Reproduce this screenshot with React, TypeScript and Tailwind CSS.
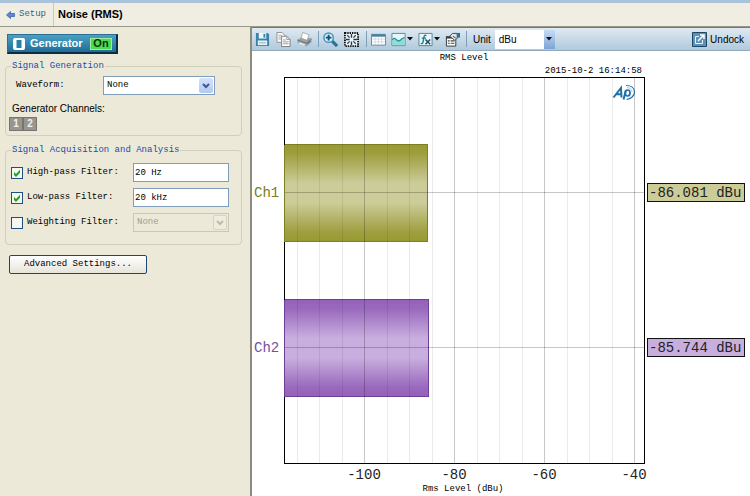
import { useState } from "react";
import type { ReactNode } from "react";

const MONO = "font-['Liberation_Mono',monospace]";

function Chevron({ className }: { className: string }) {
  return (
    <svg viewBox="0 0 8 6" className={className} fill="none" strokeWidth="2">
      <path d="M1 1l3 3 3-3" stroke="currentColor" />
    </svg>
  );
}

function Group({ title, children }: { title: string; children: ReactNode }) {
  return (
    <fieldset className="min-w-0 rounded border border-[#d0cfba] px-1">
      <legend className="ml-px px-px text-[9px] leading-3 text-[#1c4aa8]">
        {title}
      </legend>
      {children}
    </fieldset>
  );
}

type FilterRowProps = {
  id: string;
  label: string;
  checked?: boolean;
  children: ReactNode;
};

function FilterRow({ id, label, checked, children }: FilterRowProps) {
  return (
    <div className="flex items-center pr-2">
      <label htmlFor={id} className="flex w-[122px] shrink-0 items-center gap-1">
        <span className="relative size-3">
          <input
            id={id}
            type="checkbox"
            defaultChecked={checked}
            className="peer block size-3 appearance-none border border-[#1d5280] bg-[#f6f6f3]"
          />
          <svg
            viewBox="0 0 12 12"
            className="pointer-events-none absolute inset-0 hidden size-3 peer-checked:block"
          >
            <path d="M3 5v3l2 2 4-4.2v-3L5 7z" fill="#21a121" />
          </svg>
        </span>
        {label}
      </label>
      {children}
    </div>
  );
}

function Separator() {
  return <span className="h-4 w-px shrink-0 bg-[#7f9db5]" />;
}

function Tool({ label, children }: { label: string; children: ReactNode }) {
  return (
    <button type="button" aria-label={label} className="flex shrink-0 items-center">
      <svg viewBox="0 0 16 16" className="size-[15px]" fill="none">
        {children}
      </svg>
    </button>
  );
}

function MenuArrow() {
  return (
    <svg viewBox="0 0 6 4" className="h-1 w-1.5 shrink-0">
      <path d="M0 0h6L3 3.6z" fill="#111" />
    </svg>
  );
}

function Toolbar() {
  return (
    <div className="flex h-6 items-center border-y border-t-[#77776f] border-b-[#8fa9bd] bg-linear-to-b from-[#dfeaf2] to-[#b0c9dc] pr-1.5 pl-[3px] text-[10px] text-black">
      <div className="flex items-center gap-1.5">
        <Tool label="Save">
          <path d="M1 1h12.500l1.500 1.500V15H1z" fill="#3a83a8" />
          <path d="M4 1h8v6H4z" fill="#eef6fb" />
          <path d="M9 2h2v4H9z" fill="#3a83a8" />
          <path d="M3 9h10v5H3z" fill="#e2eff6" />
          <path d="M4.500 11.500h7" stroke="#8bb3ca" />
        </Tool>
        <Tool label="Copy">
          <path d="M1 .5h5.500l3 3V11H1z" fill="#fbfbfb" stroke="#8a8f93" />
          <path d="M2.500 3.500h4M2.500 5.500h3M2.500 7.500h3" stroke="#aaa" />
          <path d="M6 4.500h5.500l3.500 3.500v7.500H6z" fill="#fff" stroke="#777c80" />
          <path d="M11.500 4.500V8H15M7.500 8.500h3M7.500 10.500h6M7.500 12.500h6" stroke="#999" />
        </Tool>
        <Tool label="Print">
          <path d="M6 .5l7 2.500-2.500 6-6-2.500z" fill="#fff" stroke="#999" strokeWidth=".8" />
          <path d="M.5 8.500L4 6l6 2.500L13 6l2.500 1v4L10 15.500.5 11.500z" fill="#9da1a4" />
          <path d="M.5 8.500l9.500 3.500 5.500-4.500" stroke="#6b7074" />
          <path d="M2.500 11.500l6 2.500" stroke="#f4f4f4" strokeWidth="1.500" />
          <path d="M10.500 12.500l4-3" stroke="#3f86b8" strokeWidth="1.200" />
        </Tool>
      </div>
      <div className="ml-1.5 flex items-center gap-1">
        <Separator />
        <Tool label="Zoom in">
          <path d="M9.500 9.500l5.500 5.500" stroke="#2f7198" strokeWidth="3.400" />
          <circle cx="6" cy="6" r="5" fill="#d5eef8" stroke="#4397be" strokeWidth="1.600" />
          <path d="M6 3v6M3 6h6" stroke="#174c74" strokeWidth="2" />
        </Tool>
      </div>
      <div className="ml-1.5 flex items-center gap-[7px]">
        <Tool label="Fit to window">
          <path d="M1 1h14v14H1z" fill="#eef5f8" stroke="#111" strokeWidth="2" strokeDasharray="1.500 1" />
          <path d="M8 2v4M8 10v4M2 8h4M10 8h4" stroke="#1d3f50" strokeWidth="1.400" />
          <path d="M3.500 3.500l2.500 2.500M12.500 3.500L10 6M3.500 12.500L6 10M12.500 12.500L10 10" stroke="#1d3f50" strokeWidth="1.300" />
        </Tool>
        <Separator />
      </div>
      <div className="ml-1 flex items-center gap-[5px]">
        <Tool label="Show table">
          <path d="M.5 2.500h15v11.500H.5z" fill="#fff" stroke="#6c8294" />
          <path d="M1 2.500h14v2.500H1z" fill="#3f7fa8" />
          <path d="M1 7.500h14M1 10.500h14M4.500 5v8.500M8 5v8.500M11.500 5v8.500" stroke="#c9d3da" strokeWidth=".8" />
        </Tool>
        <div className="flex items-center gap-px">
          <Tool label="Graph style">
            <path d="M1 1.500h14v13H1z" fill="#e3f8f6" stroke="#4d8c94" />
            <path d="M1.500 9.500c3-5 5 3 8 0s4-3 5-2V14h-13z" fill="#8fdcd9" />
            <path d="M1.500 8.500c3-5 5 3.500 8 .5s4-3.500 5-2.500" stroke="#188f98" strokeWidth="1.400" />
          </Tool>
          <MenuArrow />
        </div>
        <div className="flex items-center gap-px">
          <Tool label="Functions">
            <path d="M1 1.500h14v13H1z" fill="#eaf6f9" stroke="#5a7f8e" />
            <path d="M9 3.800c-1.800-.9-2.400 0-2.800 2.200L5.400 10.500c-.3 1.800-1 2.200-2.400 1.600M4 6.500h4.500" stroke="#1f7f92" strokeWidth="1.500" />
            <path d="M8 8l5 5M13 8l-5 5" stroke="#164f6a" strokeWidth="1.600" />
          </Tool>
          <MenuArrow />
        </div>
        <Tool label="Properties">
          <path d="M1.500 5.500h10V15h-10z" fill="#fff" stroke="#333" />
          <path d="M1 4.500h8v2.500H1z" fill="#3b3f42" />
          <path d="M3 9.500h2M6 9.500h4M3 12h2M6 12h4" stroke="#444" strokeWidth="1.200" />
          <path d="M5 4.500L8 1.500h5v5L10.500 9 7.500 6.500z" fill="#dfe3e6" stroke="#3d474e" />
          <path d="M8.500 4.500l3 2" stroke="#3d474e" />
          <path d="M13 1h3v5h-3z" fill="#1f7695" />
        </Tool>
      </div>
      <div className="ml-1.5 flex items-center gap-1.5">
        <Separator />
        <label htmlFor="unit">Unit</label>
      </div>
      <div className="relative ml-1 w-[60px] shrink-0">
        <select
          id="unit"
          className="block h-[19px] w-full appearance-none bg-white pl-1 text-[10px]"
        >
          <option>dBu</option>
          <option>dBV</option>
          <option>Vrms</option>
        </select>
        <span className="pointer-events-none absolute inset-y-0 right-0 flex w-[11px] items-center justify-center bg-linear-to-b from-[#c6dbf5] to-[#7ea3d8]">
          <MenuArrow />
        </span>
      </div>
      <button type="button" className="ml-auto flex items-center gap-[3px]">
        <svg viewBox="0 0 15 15" className="size-[15px]" fill="none">
          <path d="M.5.5h14v14H.5z" fill="#5c92b8" stroke="#1f4562" />
          <path d="M7 4.500H3.500v7h7V8" stroke="#e8f3fa" />
          <path d="M6 9l5.500-5.500M8 3h4v4" stroke="#fff" strokeWidth="1.500" />
        </svg>
        Undock
      </button>
    </div>
  );
}

const channels = [
  { name: "Ch1", value: -86.081, y: 142, edge: "#7d8022", text: "#7c7c1c", box: "#cccc99", fill: "url(#olive)" },
  { name: "Ch2", value: -85.744, y: 297, edge: "#6d3f96", text: "#74509a", box: "#c8aede", fill: "url(#violet)" },
];

const majorTicks = [-100, -80, -60, -40];
const minorTicks = [-115, -110, -105, -95, -90, -85, -75, -70, -65, -55, -50, -45];

const PLOT = { left: 32, right: 392, top: 26, bottom: 412 };

// 4.5 units per dB, with -100 dBu at x = 112
const toX = (db: number) => Math.round(112 + (db + 100) * 4.5);

function LevelChart() {
  return (
    <svg
      viewBox="0 0 498 445"
      role="img"
      aria-label="RMS Level"
      className={`block w-full ${MONO}`}
    >
      <defs>
        <linearGradient id="olive" x2="0" y2="1">
          <stop offset="0" stopColor="#999933" />
          <stop offset=".1" stopColor="#9f9f40" />
          <stop offset=".4" stopColor="#cccc99" />
          <stop offset=".6" stopColor="#cccc99" />
          <stop offset=".9" stopColor="#9f9f40" />
          <stop offset="1" stopColor="#999933" />
        </linearGradient>
        <linearGradient id="violet" x2="0" y2="1">
          <stop offset="0" stopColor="#9460b8" />
          <stop offset=".1" stopColor="#9a6abe" />
          <stop offset=".4" stopColor="#c8aede" />
          <stop offset=".6" stopColor="#c8aede" />
          <stop offset=".9" stopColor="#9a6abe" />
          <stop offset="1" stopColor="#9460b8" />
        </linearGradient>
      </defs>

      <text x="212" y="9" textAnchor="middle" fontSize="9">RMS Level</text>
      <text x="390" y="22" textAnchor="end" fontSize="9">2015-10-2 16:14:58</text>

      {channels.map((ch) => (
        <rect
          key={ch.name}
          x={PLOT.left}
          y={ch.y - 48}
          width={toX(ch.value) - PLOT.left}
          height="97"
          fill={ch.fill}
          stroke={ch.edge}
          transform="translate(.5 -.5)"
        />
      ))}

      <g shapeRendering="crispEdges" stroke="#000" fill="none">
        {minorTicks.map((db) => (
          <path key={db} d={`M${toX(db) + 0.5} ${PLOT.top}V${PLOT.bottom}`} strokeOpacity=".08" />
        ))}
        {majorTicks.map((db) => (
          <path key={db} d={`M${toX(db) + 0.5} ${PLOT.top}V${PLOT.bottom}`} strokeOpacity=".22" />
        ))}
        {channels.map((ch) => (
          <path key={ch.name} d={`M${PLOT.left} ${ch.y - 0.5}H${PLOT.right}`} strokeOpacity=".22" />
        ))}
        <path d="M32.500 26v386.500h360V26z" />
        {channels.map((ch) => (
          <path key={ch.name} d={`M32.500 ${ch.y - 48}v97`} stroke={ch.edge} />
        ))}
      </g>

      {channels.map((ch) => (
        <g key={ch.name} fontSize="14">
          <text x="2" y={ch.y + 4} fill={ch.text}>{ch.name}</text>
          <rect x="395.500" y={ch.y - 9.5} width="97" height="18" fill={ch.box} stroke="#111" />
          <text x="397" y={ch.y + 4} fill="#222">{ch.value.toFixed(3)} dBu</text>
        </g>
      ))}

      {majorTicks.map((db) => (
        <text key={db} x={toX(db)} y="428" textAnchor="middle" fontSize="14" fill="#222">
          {db}
        </text>
      ))}
      <text x="211" y="440" textAnchor="middle" fontSize="9">Rms Level (dBu)</text>

      <g fill="none" stroke="#1f6fa8">
        <path d="M374 34.500c5 0 8.500 2.500 8.500 6.500s-3.500 7-8 7.500" strokeWidth="1.200" />
        <path d="M375 36.500c3 .3 5 2 5 4.500" stroke="#8dbbd8" strokeWidth=".8" />
        <path d="M361.500 46.500l7.500-9.500.5 9.500M364.500 43.200h5" strokeWidth="2" />
        <path d="M371.500 48.500l2.500-9.500" strokeWidth="2" />
        <ellipse cx="375.600" cy="42" rx="2.400" ry="3" strokeWidth="1.700" />
      </g>
    </svg>
  );
}

export default function App() {
  const [on, setOn] = useState(true);

  return (
    <div className="flex min-h-screen flex-col bg-[#ece9d8] font-['Liberation_Sans',sans-serif] text-black">
      <header className="flex h-[27px] items-stretch border-t-3 border-b border-t-[#a8c3da] border-b-[#99978b] bg-[#f0eee2]">
        <a
          href="#setup"
          className={`flex w-[54px] items-center gap-1 border-r border-[#cbc9ba] pl-1.5 text-[9px] text-[#33628c] ${MONO}`}
        >
          <svg viewBox="0 0 9 8" className="h-2 w-[9px]">
            <path d="M4.500.5v2h4v3h-4v2L.5 4z" fill="#5b87dc" stroke="#2e57a5" strokeWidth=".7" />
          </svg>
          Setup
        </a>
        <h1 className="self-center pl-1 text-[11px] font-bold">Noise (RMS)</h1>
      </header>

      <div className="flex grow">
        <aside className={`w-[250px] shrink-0 pt-[7px] pr-2 pl-[5px] text-[9px] ${MONO}`}>
          <button
            type="button"
            aria-pressed={on}
            onClick={() => setOn(!on)}
            className="mb-1.5 ml-0.5 flex h-5 w-[111px] items-center border border-t-[#2b6f93] border-r-2 border-b-2 border-l-[#2b6f93] border-r-[#0c2c44] border-b-[#0c2c44] bg-linear-to-b from-[#4aa0c4] to-[#1e6d99] pl-1 font-['Liberation_Sans',sans-serif] text-[11px] font-bold text-white"
          >
            <svg viewBox="0 0 14 14" className="mr-1 size-3.5 shrink-0">
              <rect x="1" y="1" width="12" height="12" rx="2" fill="#fff" />
              <path d="M4.500 3h5v8h-5z" fill="#2581a8" />
            </svg>
            Generator
            <span className="mr-1 ml-auto flex h-3 w-[22px] items-center justify-center border border-[#a4e9a0] bg-[#4ddc4e] text-[#06330b]">
              {on ? "On" : "Off"}
            </span>
          </button>

          <div className="flex flex-col gap-2">
            <Group title="Signal Generation">
              <div className="flex items-center pt-1 pl-1.5">
                <label htmlFor="waveform" className="w-[87px]">Waveform:</label>
                <div className="relative w-28">
                  <select
                    id="waveform"
                    className="block h-[19px] w-full appearance-none border border-[#7f9db9] bg-white pl-[3px]"
                  >
                    <option>None</option>
                    <option>Sine</option>
                  </select>
                  <span className="pointer-events-none absolute inset-y-0.5 right-0.5 flex w-3.5 items-center justify-center rounded-xs bg-linear-to-b from-[#d5e2fd] to-[#b3c9f3] text-[#3d5a8a]">
                    <Chevron className="h-1.5 w-2" />
                  </span>
                </div>
              </div>
              <p className="mt-1.5 pl-0.5 font-['Liberation_Sans',sans-serif] text-[10px] leading-4">
                Generator Channels:
              </p>
              <div className="mb-1 flex font-['Liberation_Sans',sans-serif] text-[10px] font-bold text-[#f0f0f0]">
                <button type="button" className="-ml-px size-3.5 border border-[#77756f] bg-[#98968f] leading-3">1</button>
                <button type="button" className="size-3.5 border border-[#77756f] bg-[#98968f] leading-3">2</button>
              </div>
            </Group>

            <Group title="Signal Acquisition and Analysis">
              <div className="flex flex-col gap-1.5 pt-[7px] pb-3 pl-px">
                <FilterRow id="high-pass" label="High-pass Filter:" checked>
                  <input
                    aria-label="High-pass frequency"
                    defaultValue="20 Hz"
                    className="h-[19px] w-24 border border-[#7f9db9] bg-white px-px"
                  />
                </FilterRow>
                <FilterRow id="low-pass" label="Low-pass Filter:" checked>
                  <input
                    aria-label="Low-pass frequency"
                    defaultValue="20 kHz"
                    className="h-[19px] w-24 border border-[#7f9db9] bg-white px-px"
                  />
                </FilterRow>
                <FilterRow id="weighting" label="Weighting Filter:">
                  <div className="relative w-24">
                    <select
                      aria-label="Weighting"
                      disabled
                      className="block h-[19px] w-full appearance-none border border-[#c9c7ba] bg-[#ece9d8] pl-[3px] text-[#a09d8d] opacity-100"
                    >
                      <option>None</option>
                    </select>
                    <span className="pointer-events-none absolute inset-y-0.5 right-0.5 flex w-3.5 items-center justify-center rounded-xs border border-[#d6d3c4] bg-[#eeecdf] text-[#bebbab]">
                      <Chevron className="h-1.5 w-2" />
                    </span>
                  </div>
                </FilterRow>
              </div>
            </Group>
          </div>

          <button
            type="button"
            className="mt-2.5 ml-1 h-[19px] w-[138px] rounded-xs border border-[#1d4670] bg-linear-to-b from-white to-[#e6e4da]"
          >
            Advanced Settings...
          </button>
        </aside>

        <main className="min-w-0 grow border-l-2 border-[#8d8b80] bg-white">
          <Toolbar />
          <LevelChart />
        </main>
      </div>
    </div>
  );
}
